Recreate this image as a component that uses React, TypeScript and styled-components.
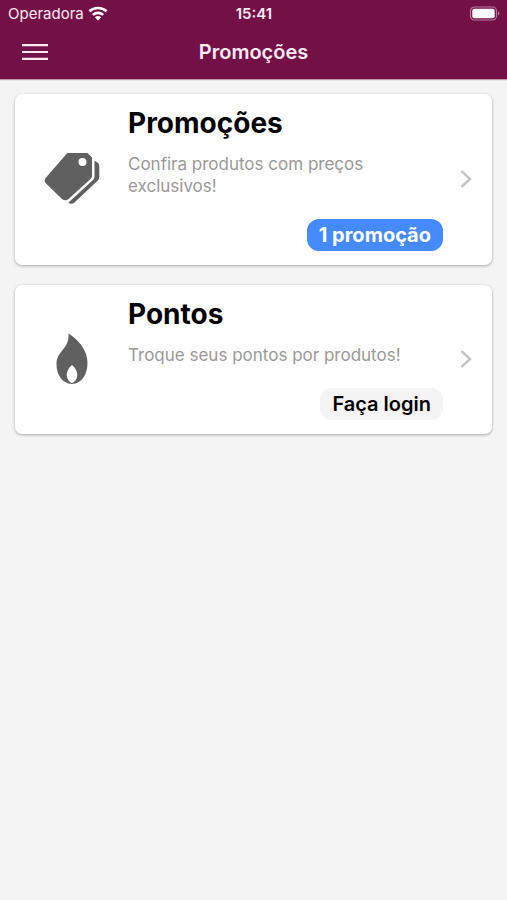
import React from "react";
import styled, { createGlobalStyle } from "styled-components";

const GlobalStyle = createGlobalStyle`
  * { box-sizing: border-box; }
  body {
    margin: 0;
    background: #f4f4f4;
    font-family: Inter, "Liberation Sans", sans-serif;
    -webkit-font-smoothing: antialiased;
  }
`;

const Header = styled.header`
  background: #731147;
  color: #fbe9f3;
  box-shadow: 0 1px 1px rgba(115, 17, 71, 0.4);
`;

const StatusBar = styled.div`
  display: grid;
  grid-template-columns: 1fr auto 1fr;
  align-items: center;
  height: 27px;
  padding: 0 7px 0 8px;
  font-size: 15px;
  line-height: 20px;
`;

const Carrier = styled.div`
  display: flex;
  align-items: center;
  gap: 4px;
`;

const Clock = styled.time`
  font-weight: 600;
`;

const Battery = styled.div`
  display: flex;
  justify-content: flex-end;
`;

const NavBar = styled.div`
  display: grid;
  grid-template-columns: 1fr auto 1fr;
  align-items: center;
  height: 52px;
  padding: 0 16px 2px;
`;

const MenuButton = styled.button`
  display: flex;
  justify-self: start;
  padding: 6px;
  border: 0;
  background: none;
  color: inherit;
  cursor: pointer;
`;

const PageTitle = styled.h1`
  margin: 0;
  font-size: 20px;
  line-height: 24px;
  font-weight: 600;
`;

const CardList = styled.main`
  display: flex;
  flex-direction: column;
  gap: 20px;
  padding: 15px;
`;

const Card = styled.a`
  display: grid;
  grid-template-columns: 113px 1fr 45px;
  align-items: center;
  padding: 12px 4px 14px 0;
  border-radius: 7px;
  background: #fff;
  box-shadow: 0 1px 3px rgba(0, 0, 0, 0.32);
  color: #000;
  text-decoration: none;
`;

const CardIcon = styled.div`
  display: flex;
  justify-content: center;
  color: #606060;
`;

const CardBody = styled.div`
  display: flex;
  flex-direction: column;
`;

const CardTitle = styled.h2`
  margin: 0 0 13px;
  font-size: 28px;
  line-height: 34px;
  font-weight: 700;
`;

const Description = styled.p`
  margin: 0 0 22px;
  max-width: 300px;
  color: #999;
  font-size: 17px;
  line-height: 22px;
`;

const Badge = styled.span<{ $tone: "primary" | "neutral" }>`
  align-self: flex-end;
  padding: 4px 12px;
  border-radius: 12px;
  background: ${(p) => (p.$tone === "primary" ? "#458aff" : "#f4f4f4")};
  color: ${(p) => (p.$tone === "primary" ? "#fff" : "#000")};
  font-size: 20px;
  line-height: 24px;
  font-weight: ${(p) => (p.$tone === "primary" ? 700 : 600)};
`;

const Chevron = styled.svg`
  justify-self: center;
  color: #c4c4c4;
`;

const WifiIcon = () => (
  <svg width="20" height="15" viewBox="0 0 20 15" fill="none" stroke="#fff" strokeWidth="2.6" aria-hidden="true">
    <path d="M1.4 5.3C6.2.8 13.8.8 18.6 5.3" />
    <path d="M4.8 8.9C7.7 6.2 12.3 6.2 15.2 8.9" />
    <path d="M10 14.4 6.9 11.3C8.6 9.7 11.4 9.7 13.1 11.3Z" fill="#fff" stroke="none" />
  </svg>
);

const BatteryIcon = () => (
  <svg width="31" height="15" viewBox="0 0 31 15" aria-hidden="true">
    <rect x="1.5" y="1" width="26" height="13" rx="4" fill="none" stroke="#b57a9b" strokeWidth="1.2" />
    <rect x="3.3" y="2.8" width="22.4" height="9.4" rx="2" fill="#fff" />
    <path d="M29 5.5c2 .7 2 3.300 0 4Z" fill="#b57a9b" />
  </svg>
);

const MenuIcon = () => (
  <svg width="26" height="16" viewBox="0 0 26 16" stroke="currentColor" strokeWidth="2.2" aria-hidden="true">
    <path d="M0 1.200H26M0 8H26M0 14.800H26" />
  </svg>
);

const TagsIcon = () => (
  <svg width="56" height="52" viewBox="0 0 56 52" fill="currentColor" aria-hidden="true">
    <path
      fillRule="evenodd"
      d="M24.500 0H43.500L48 4.500V22.500Q48 24.500 46.500 26L24.500 46Q21.200 48.600 18 46L1.600 30Q0 28 1.200 25.400L22 1.400Q23 0 24.500 0ZM38.500 5A4 4 0 1 0 38.500 13A4 4 0 1 0 38.500 5Z"
    />
    <path d="M50.500 7.500 54 10Q55.300 11 55.300 13V24Q55.300 26 53.800 27.500L30.500 49.500Q29 50.800 27 50.800Q25.500 50.800 24.500 49.500L49 27Q50.500 25.500 50.500 23.500Z" />
  </svg>
);

const FlameIcon = () => (
  <svg width="32" height="52" viewBox="0 0 32 52" fill="currentColor" aria-hidden="true">
    <path d="M12.500.5C22 6.500 31.500 17 31.500 29.500C31.500 42 25.500 50.500 16 51C6.500 50.500.5 42 .5 31.500C.5 17 13.500 17 12.500.5Z" />
    <path d="M16 32C19 34.500 21.300 38 21.300 41.500C21.300 45.500 19 49 16 50C13 49 10.700 45.500 10.700 41.500C10.700 38 13 34.500 16 32Z" fill="#fff" />
  </svg>
);

const cards = [
  {
    title: "Promoções",
    description: "Confira produtos com preços exclusivos!",
    badge: "1 promoção",
    tone: "primary" as const,
    icon: <TagsIcon />,
    href: "#promocoes",
  },
  {
    title: "Pontos",
    description: "Troque seus pontos por produtos!",
    badge: "Faça login",
    tone: "neutral" as const,
    icon: <FlameIcon />,
    href: "#pontos",
  },
];

export default function App() {
  return (
    <>
      <GlobalStyle />
      <Header>
        <StatusBar>
          <Carrier>
            Operadora
            <WifiIcon />
          </Carrier>
          <Clock>15:41</Clock>
          <Battery>
            <BatteryIcon />
          </Battery>
        </StatusBar>
        <NavBar>
          <MenuButton type="button" aria-label="Menu">
            <MenuIcon />
          </MenuButton>
          <PageTitle>Promoções</PageTitle>
        </NavBar>
      </Header>
      <CardList>
        {cards.map((card) => (
          <Card key={card.title} href={card.href}>
            <CardIcon>{card.icon}</CardIcon>
            <CardBody>
              <CardTitle>{card.title}</CardTitle>
              <Description>{card.description}</Description>
              <Badge $tone={card.tone}>{card.badge}</Badge>
            </CardBody>
            <Chevron width="12" height="18" viewBox="0 0 12 18" fill="none" stroke="currentColor" strokeWidth="2.400" aria-hidden="true">
              <path d="M1.500 1.200 10 9 1.500 16.800" />
            </Chevron>
          </Card>
        ))}
      </CardList>
    </>
  );
}
